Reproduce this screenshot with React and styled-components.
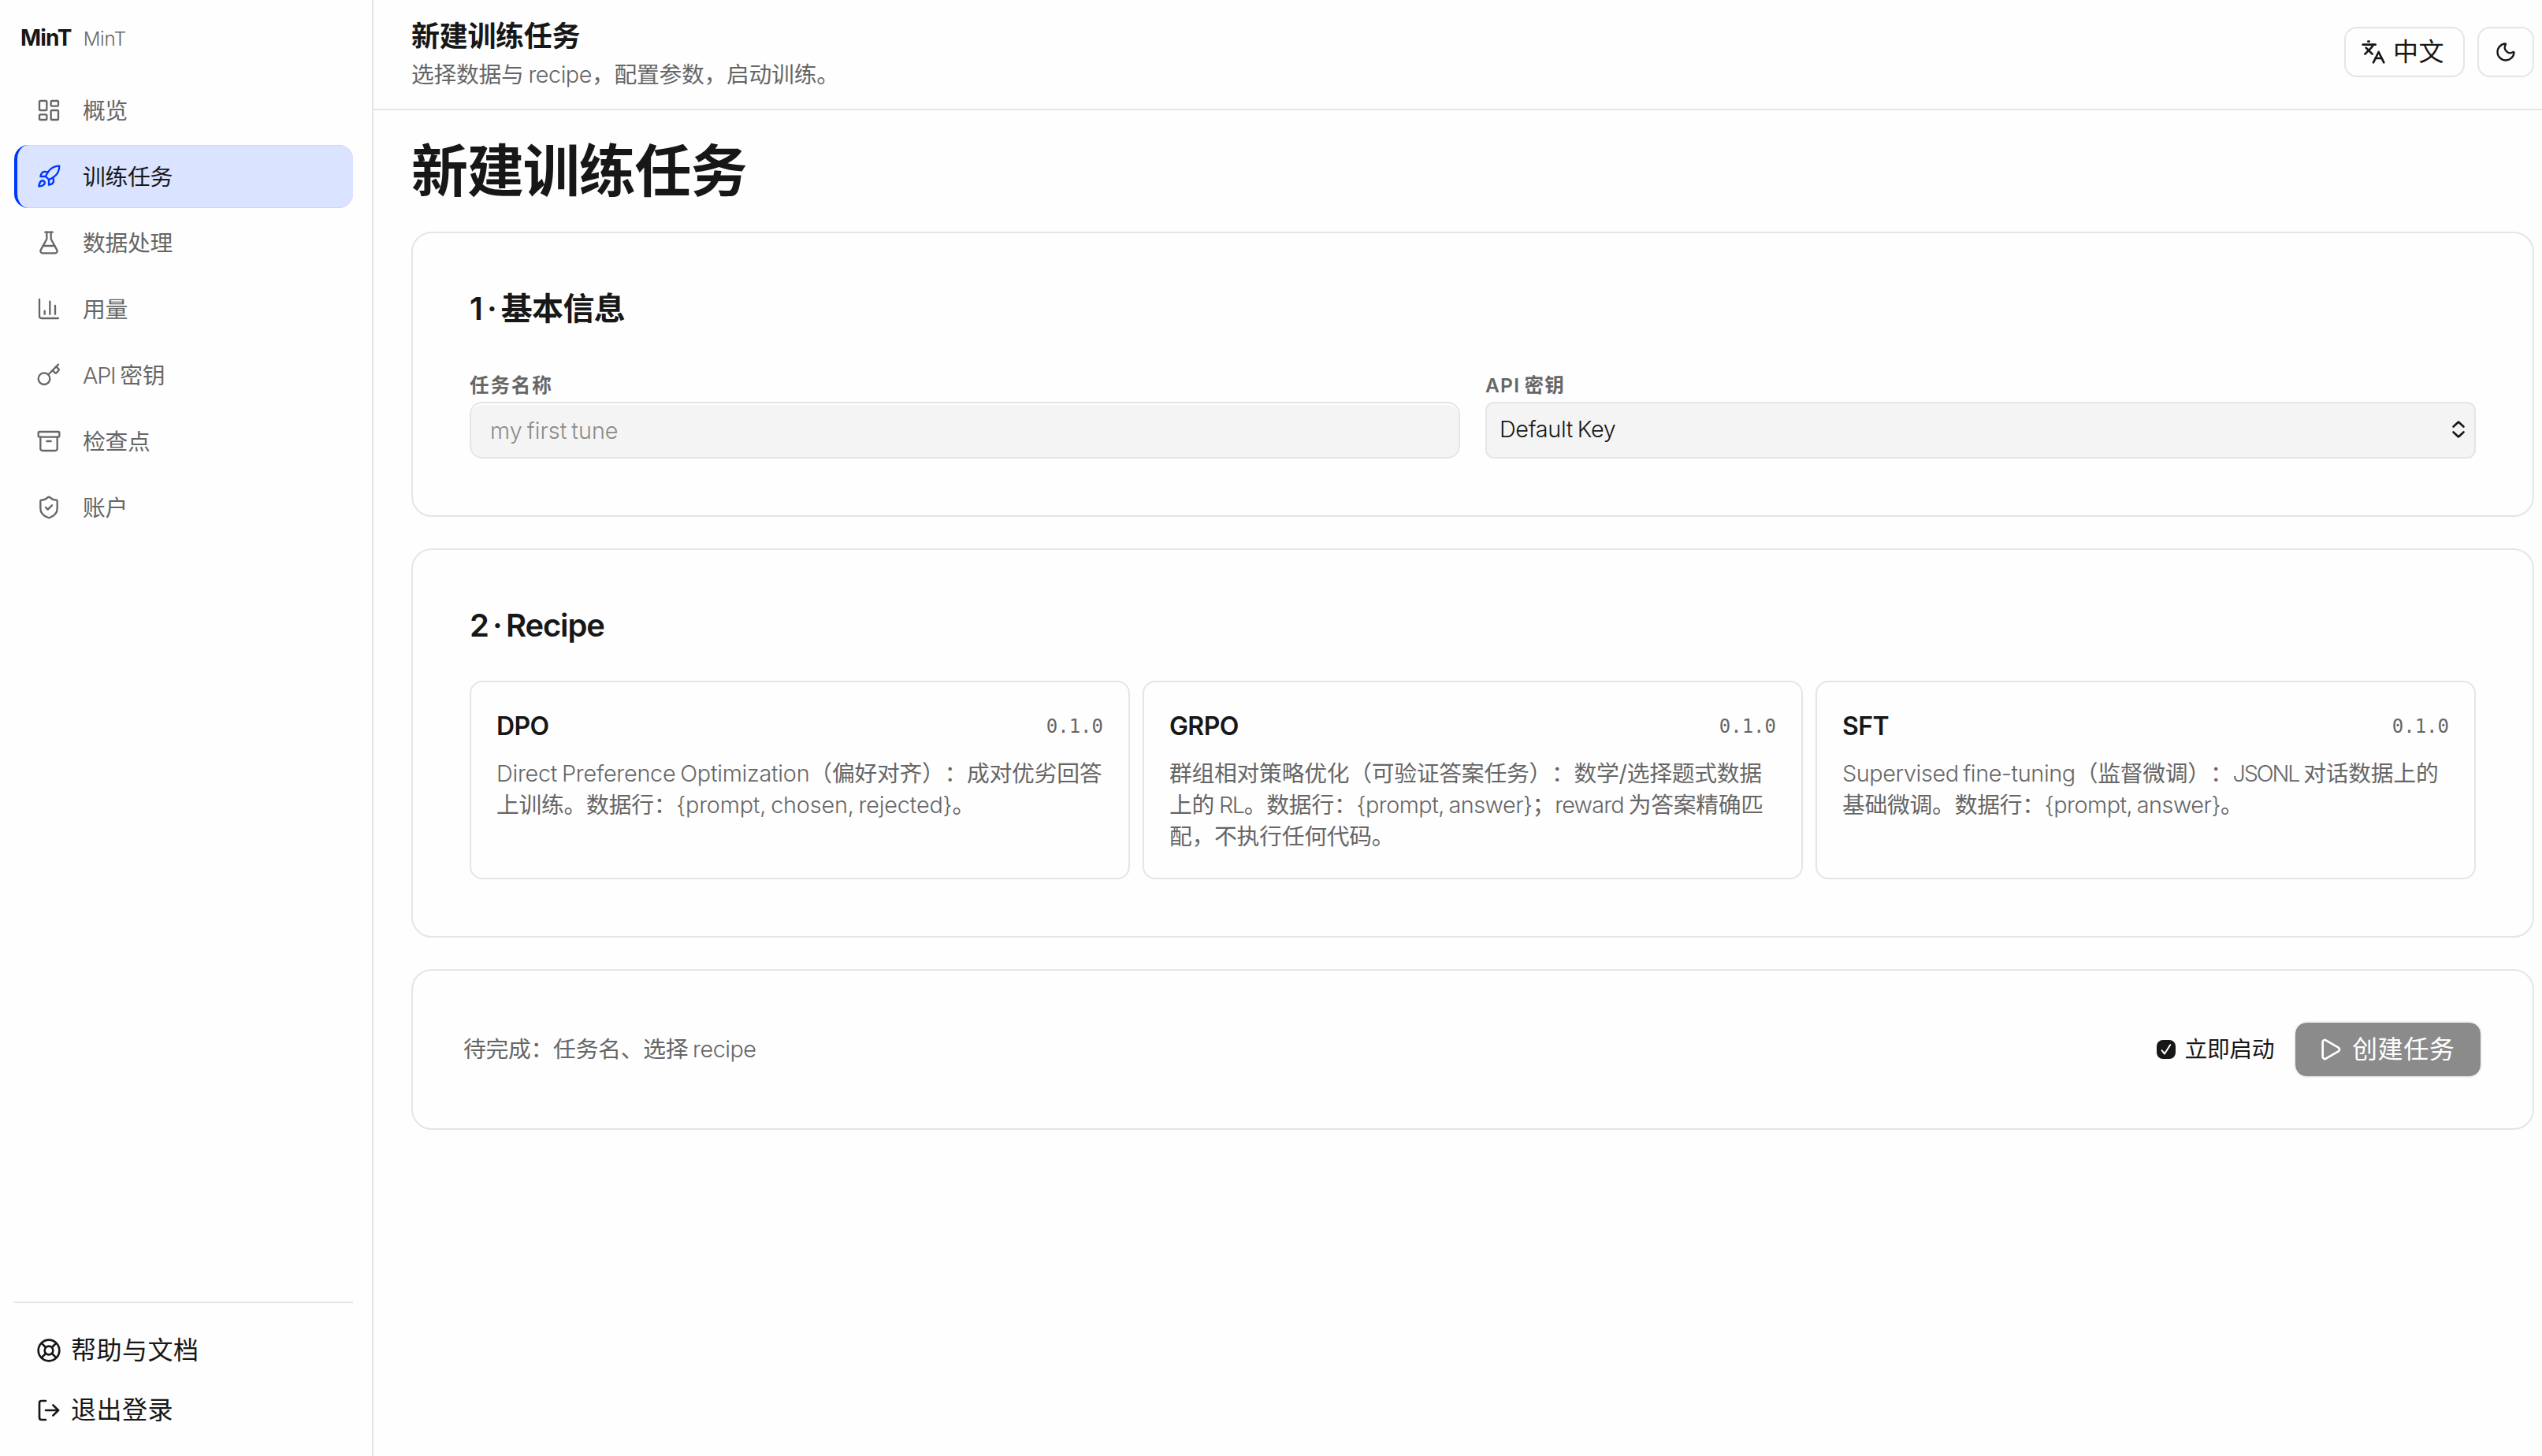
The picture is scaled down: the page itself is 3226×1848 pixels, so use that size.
import React from "react";
import styled, { createGlobalStyle } from "styled-components";
import {
  LayoutDashboard,
  Rocket,
  FlaskConical,
  ChartColumn,
  Key,
  Archive,
  ShieldCheck,
  LifeBuoy,
  LogOut,
  Languages,
  Moon,
  Play,
} from "lucide-react";

const c = {
  bg: "#fefefe",
  text: "#171717",
  muted: "#666666",
  line: "#e5e5e5",
  field: "#f4f4f4",
  accent: "#0037ff",
  active: "#dae3ff",
};

const GlobalStyle = createGlobalStyle`
  *, *::before, *::after { box-sizing: border-box; }
  html, body { margin: 0; background: ${c.bg}; }
  body {
    color: ${c.text};
    font-family: Inter, "Noto Sans CJK SC", sans-serif;
    font-size: 28.8px;
    line-height: 40px;
    letter-spacing: -0.27px;
    word-spacing: -2px;
    text-spacing-trim: space-all;
    font-kerning: normal;
  }
  h1, h2, h3, p { margin: 0; }
  button, input { font: inherit; color: inherit; letter-spacing: inherit; word-spacing: inherit; }
  svg { display: block; flex: none; }
`;

const Shell = styled.div`
  display: grid;
  grid-template-columns: 474px 1fr;
  height: 1848px;
  overflow: hidden;
`;

const Sidebar = styled.aside`
  display: flex;
  flex-direction: column;
  padding: 0 24px 22px 18px;
  border-right: 2px solid ${c.line};
`;

const Brand = styled.div`
  display: flex;
  align-items: baseline;
  gap: 15px;
  height: 100px;
  padding: 28px 0 0 8px;
`;

const BrandName = styled.strong`
  font-size: 28px;
  font-weight: 700;
  letter-spacing: -0.8px;
`;

const BrandSub = styled.span`
  font-size: 24px;
  font-weight: 300;
  color: ${c.muted};
  letter-spacing: -0.2px;
`;

const Nav = styled.nav`
  display: flex;
  flex-direction: column;
  gap: 4px;
  flex: 1;
`;

const NavItem = styled.a`
  display: flex;
  align-items: center;
  gap: 27px;
  height: 80px;
  padding-left: ${(p) => (p.$active ? 24 : 28)}px;
  border-left: ${(p) => (p.$active ? `4px solid ${c.accent}` : "0")};
  border-radius: 18px;
  background: ${(p) => (p.$active ? c.active : "transparent")};
  box-shadow: ${(p) => (p.$active ? "inset 0 1px #cbd7fb, inset 0 -1px #cbd7fb" : "none")};
  color: ${(p) => (p.$active ? c.text : c.muted)};
  svg { color: ${(p) => (p.$active ? c.accent : "inherit")}; }
`;

const NavLabel = styled.span`
  padding-top: 2px;
`;

const SideFooter = styled.div`
  display: flex;
  flex-direction: column;
  gap: 4px;
  padding: 24px 0 0 28px;
  border-top: 2px solid ${c.line};
`;

const FooterLink = styled.a`
  display: flex;
  align-items: center;
  gap: 12px;
  height: 72px;
  font-size: 32px;
  letter-spacing: 0.5px;
`;

const Main = styled.main`
  display: flex;
  flex-direction: column;
  min-width: 0;
`;

const Topbar = styled.header`
  display: flex;
  justify-content: space-between;
  height: 140px;
  padding: 0 10px 0 48px;
  border-bottom: 2px solid ${c.line};
`;

const TopText = styled.div`
  padding-top: 21px;
`;

const TopTitle = styled.h2`
  font-size: 36px;
  line-height: 50px;
  font-weight: 700;
  letter-spacing: -0.3px;
`;

const TopSub = styled.p`
  line-height: 48px;
  color: ${c.muted};
`;

const TopActions = styled.div`
  display: flex;
  gap: 16px;
  padding-top: 34px;
`;

const ToolButton = styled.button`
  display: flex;
  align-items: center;
  justify-content: center;
  gap: 9px;
  width: ${(p) => p.$width}px;
  height: 64px;
  padding: 0 ${(p) => p.$nudge || 0}px 0 0;
  border: 2px solid ${c.line};
  border-radius: 16px;
  background: ${c.bg};
  font-size: 32px;
  letter-spacing: 0.4px;
`;

const Content = styled.div`
  display: flex;
  flex-direction: column;
  gap: 40px;
  padding: 34px 10px 0 48px;
`;

const PageTitle = styled.h1`
  height: 80px;
  font-size: 72px;
  line-height: 86px;
  font-weight: 700;
  letter-spacing: -1.1px;
`;

const Card = styled.section`
  height: ${(p) => p.$height}px;
  padding: 72px 72px 0;
  border: 2px solid ${c.line};
  border-radius: 26px;
`;

const CardTitle = styled.h2`
  font-size: 40px;
  line-height: 48px;
  font-weight: 600;
  letter-spacing: ${(p) => (p.$tight ? -1.15 : -0.7)}px;
  word-spacing: -3.6px;
`;

const Fields = styled.div`
  display: grid;
  grid-template-columns: 1fr 1fr;
  gap: 32px;
  padding-top: 56px;
`;

const Field = styled.label`
  display: flex;
  flex-direction: column;
  gap: 4px;
`;

const FieldLabel = styled.span`
  font-size: 24.6px;
  line-height: 34px;
  font-weight: 600;
  letter-spacing: ${(p) => p.$track ?? 1.8}px;
  color: ${c.muted};
`;

const Input = styled.input`
  height: 72px;
  width: 100%;
  padding: 0 24px;
  border: 2px solid ${c.line};
  border-radius: 16px;
  background: ${c.field};
  box-shadow: inset 0 2px #fff;
  font-weight: 300;
  letter-spacing: 0;
  outline: none;
  &::placeholder { color: #8a8a8a; opacity: 1; }
`;

const SelectBox = styled.div`
  display: flex;
  align-items: center;
  justify-content: space-between;
  height: 72px;
  padding: 0 10px 2px 16px;
  border: 2px solid ${c.line};
  border-radius: 11px;
  background: ${c.field};
`;

const Recipes = styled.div`
  display: grid;
  grid-template-columns: repeat(3, 1fr);
  gap: 16px;
  padding-top: 46px;
`;

const Recipe = styled.article`
  height: 252px;
  padding: 32px 32px 0;
  border: 2px solid ${c.line};
  border-radius: 16px;
`;

const RecipeHead = styled.div`
  display: flex;
  align-items: flex-start;
  justify-content: space-between;
  height: 64px;
  line-height: 48px;
`;

const RecipeName = styled.h3`
  font-size: 32px;
  font-weight: 600;
  letter-spacing: -0.6px;
`;

const Version = styled.span`
  font-family: "DejaVu Sans Mono", monospace;
  font-size: 24px;
  letter-spacing: 0;
  color: ${c.muted};
`;

const RecipeText = styled.p`
  color: ${c.muted};
  white-space: pre-line;
`;

const Latin = styled.span`
  font-weight: 300;
  letter-spacing: ${(p) => p.$track ?? -0.5}px;
`;

const SubmitCard = styled.section`
  display: flex;
  align-items: center;
  height: 204px;
  padding: 0 64px;
  border: 2px solid ${c.line};
  border-radius: 26px;
`;

const Pending = styled.p`
  flex: 1;
  color: ${c.muted};
`;

const StartNow = styled.label`
  display: flex;
  align-items: center;
  gap: 12px;
  margin-right: 25px;
  letter-spacing: -0.45px;
`;

const CheckMark = styled.span`
  display: flex;
  align-items: center;
  justify-content: center;
  width: 24px;
  height: 24px;
  border-radius: 8px;
  background: ${c.text};
`;

const CreateButton = styled.button`
  display: flex;
  align-items: center;
  gap: 12px;
  width: 239px;
  height: 72px;
  padding: 0 28px;
  border: 2px solid #f2f2f2;
  border-radius: 16px;
  background: #8b8b8b;
  background-clip: padding-box;
  color: #fff;
  font-size: 32px;
  letter-spacing: 0.6px;
  white-space: nowrap;
`;

const nav = [
  { label: "概览", icon: LayoutDashboard },
  { label: "训练任务", icon: Rocket, active: true },
  { label: "数据处理", icon: FlaskConical },
  { label: "用量", icon: ChartColumn },
  { label: <><Latin $track={-1.2}>API</Latin> 密钥</>, icon: Key },
  { label: "检查点", icon: Archive },
  { label: "账户", icon: ShieldCheck },
];

const recipes = [
  {
    name: "DPO",
    text: (
      <>
        <Latin $track={-0.25}>Direct Preference Optimization</Latin>（偏好对齐）：成对优劣回答{"\n"}
        上训练。数据行：<Latin $track={-0.18}>{"{prompt, chosen, rejected}"}</Latin>。
      </>
    ),
  },
  {
    name: "GRPO",
    text: (
      <>
        群组相对策略优化（可验证答案任务）：数学/选择题式数据{"\n"}
        上的 <Latin $track={-1.3}>RL</Latin>。数据行：<Latin>{"{prompt, answer}"}</Latin>；
        <Latin $track={-0.8}>reward</Latin> 为答案精确匹{"\n"}
        配，不执行任何代码。
      </>
    ),
  },
  {
    name: "SFT",
    text: (
      <>
        <Latin $track={-0.4}>Supervised fine-tuning</Latin>（监督微调）：<Latin $track={-2.1}>JSONL</Latin> 对话数据上的{"\n"}
        基础微调。数据行：<Latin>{"{prompt, answer}"}</Latin>。
      </>
    ),
  },
];

function SelectArrows() {
  return (
    <svg width="20" height="24" viewBox="0 0 20 24" fill="none" stroke={c.text} strokeWidth="2.6" strokeLinecap="round" strokeLinejoin="round">
      <path d="M3.5 8.5 10 2.5l6.5 6M3.5 15.5l6.5 6 6.5-6" />
    </svg>
  );
}

export default function App() {
  return (
    <>
      <GlobalStyle />
      <Shell>
        <Sidebar>
          <Brand>
            <BrandName>MinT</BrandName>
            <BrandSub>MinT</BrandSub>
          </Brand>
          <Nav>
            {nav.map(({ label, icon: Icon, active }, i) => (
              <NavItem key={i} $active={active}>
                <Icon size={32} strokeWidth={1.75} />
                <NavLabel>{label}</NavLabel>
              </NavItem>
            ))}
          </Nav>
          <SideFooter>
            <FooterLink>
              <LifeBuoy size={32} strokeWidth={2} />
              帮助与文档
            </FooterLink>
            <FooterLink>
              <LogOut size={32} strokeWidth={2} />
              退出登录
            </FooterLink>
          </SideFooter>
        </Sidebar>
        <Main>
          <Topbar>
            <TopText>
              <TopTitle>新建训练任务</TopTitle>
              <TopSub>选择数据与 <Latin>recipe</Latin>，配置参数，启动训练。</TopSub>
            </TopText>
            <TopActions>
              <ToolButton $width={153} $nudge={5}>
                <Languages size={32} strokeWidth={2} />
                中文
              </ToolButton>
              <ToolButton $width={72}>
                <Moon size={28} strokeWidth={2} />
              </ToolButton>
            </TopActions>
          </Topbar>
          <Content>
            <PageTitle>新建训练任务</PageTitle>
            <Card $height={362}>
              <CardTitle>1 · 基本信息</CardTitle>
              <Fields>
                <Field>
                  <FieldLabel>任务名称</FieldLabel>
                  <Input placeholder="my first tune" />
                </Field>
                <Field>
                  <FieldLabel $track={1.2}>API 密钥</FieldLabel>
                  <SelectBox>
                    <Latin $track={-0.35}>Default Key</Latin>
                    <SelectArrows />
                  </SelectBox>
                </Field>
              </Fields>
            </Card>
            <Card $height={494}>
              <CardTitle $tight>2 · Recipe</CardTitle>
              <Recipes>
                {recipes.map((r) => (
                  <Recipe key={r.name}>
                    <RecipeHead>
                      <RecipeName>{r.name}</RecipeName>
                      <Version>0.1.0</Version>
                    </RecipeHead>
                    <RecipeText>{r.text}</RecipeText>
                  </Recipe>
                ))}
              </Recipes>
            </Card>
            <SubmitCard>
              <Pending>待完成：任务名、选择 <Latin>recipe</Latin></Pending>
              <StartNow>
                <CheckMark>
                  <svg width="16" height="16" viewBox="0 0 16 16" fill="none" stroke="#fff" strokeWidth="2" strokeLinecap="round" strokeLinejoin="round">
                    <path d="M2.5 9.2 6 13.5 13.2 2.2" />
                  </svg>
                </CheckMark>
                立即启动
              </StartNow>
              <CreateButton>
                <Play size={32} strokeWidth={2} />
                创建任务
              </CreateButton>
            </SubmitCard>
          </Content>
        </Main>
      </Shell>
    </>
  );
}
